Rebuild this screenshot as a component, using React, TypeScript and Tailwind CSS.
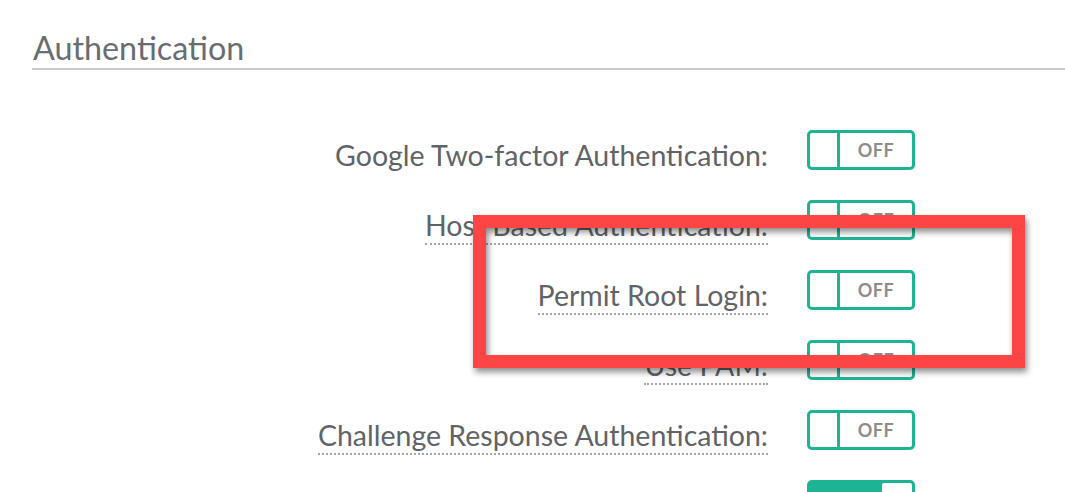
import React from 'react';

type Setting = {
  label: string;
  on: boolean;
  hint?: boolean;
};

const settings: Setting[] = [
  { label: 'Google Two-factor Authentication:', on: false },
  { label: 'Host Based Authentication:', on: false, hint: true },
  { label: 'Permit Root Login:', on: false, hint: true },
  { label: 'Use PAM:', on: false, hint: true },
  { label: 'Challenge Response Authentication:', on: false, hint: true },
  // label for this row sits below the fold
  { label: '', on: true },
];

const Toggle: React.FC<{ on: boolean }> = ({ on }) => {
  if (on) {
    return (
      <div className="flex h-[40px] w-[108px] rounded-[5px] border-[3px] border-[#1db494] bg-[#1db494]">
        <div className="flex-1" />
        <div className="w-[30px] rounded-[2px] bg-white" />
      </div>
    );
  }
  return (
    <div className="flex h-[40px] w-[108px] rounded-[5px] border-[3px] border-[#1db494] bg-white">
      <div className="w-[30px] border-r-[3px] border-[#1db494]" />
      <div className="flex flex-1 items-center justify-center text-[18px] font-bold tracking-[0.5px] text-[#8d8d8d]">
        OFF
      </div>
    </div>
  );
};

export default function App() {
  return (
    <div
      className="relative h-[492px] w-[1065px] overflow-hidden bg-white"
      style={{ fontFamily: 'Lato, "Open Sans", sans-serif' }}
    >
      {/* Section heading */}
      <div className="ml-[32px] pt-[29px]">
        <h2 className="border-b-2 border-[#cbcbcb] pb-[1px] pl-[1px] text-[32.3px] leading-[38px] text-[#6a6d70]">
          Authentication
        </h2>
      </div>

      {/* Settings rows */}
      <div className="mt-[45px] flex flex-col">
        {settings.map((s, i) => (
          <div key={i} className="flex h-[70px] items-center">
            <div className="w-[768px] pt-[10px] text-right text-[28.5px] leading-[32px] text-[#606469]">
              <span
                className={
                  s.hint
                    ? 'border-b-2 border-dotted border-[#a6a6a6] pb-[1px]'
                    : ''
                }
              >
                {s.label}
              </span>
            </div>
            <div className="ml-[39px]">
              <Toggle on={s.on} />
            </div>
          </div>
        ))}
      </div>

      {/* Annotation highlight */}
      <div className="absolute left-[473px] top-[215px] h-[153px] w-[552px] border-[13px] border-[#fe4545] drop-shadow-[2px_4px_3px_rgba(0,0,0,0.45)]" />
    </div>
  );
}
